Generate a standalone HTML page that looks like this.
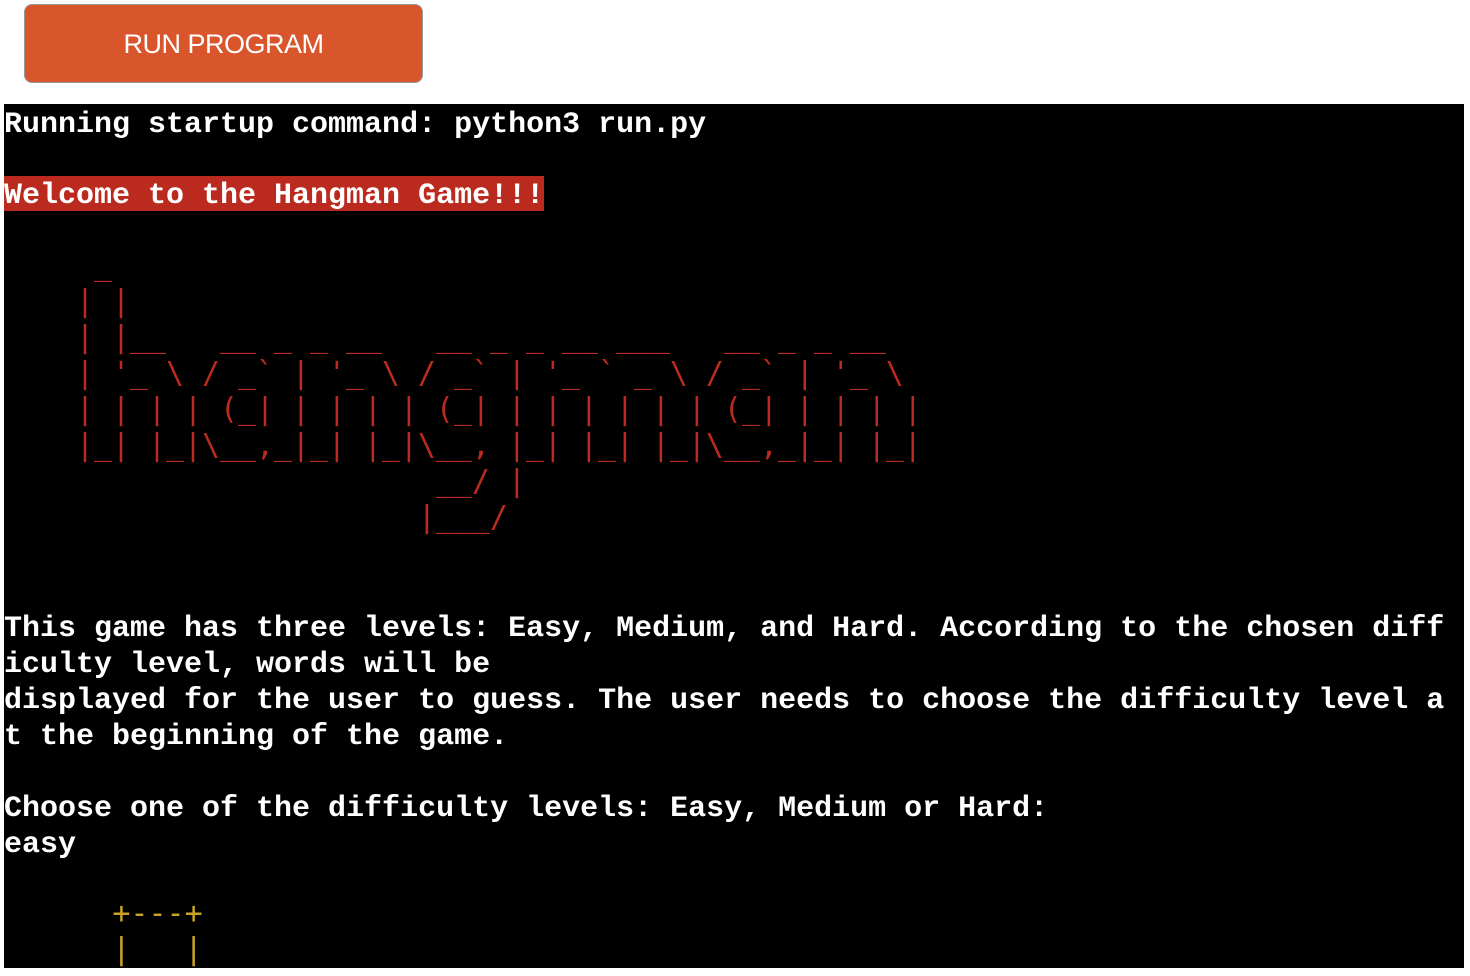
<!DOCTYPE html>
<html><head><meta charset="utf-8"><style>
html,body{margin:0;padding:0;background:#fff;width:1470px;height:976px;overflow:hidden}
.btn{position:absolute;left:24px;top:4px;width:399px;height:79px;background:#D9552B;border:1px solid #999;border-radius:8px;box-sizing:border-box;color:#fff;font:27px "Liberation Sans",Arial,sans-serif;display:flex;align-items:center;justify-content:center;padding-top:1px;letter-spacing:-0.5px}
.term{position:absolute;left:4px;top:104px;width:1460px;height:864px;background:#000;overflow:hidden}
pre{margin:0;font-family:"Liberation Mono","Courier New",monospace;font-weight:bold;font-size:30px;line-height:36px;height:36px;color:#fff;white-space:pre;overflow:visible}
.t{position:relative;top:3px}
.w{background:#BB2A1E;display:inline-block;height:35px;vertical-align:top}
.w span{position:relative;top:2px}
.art{font-family:"DejaVu Sans Mono",monospace;font-weight:normal;color:#BB2A1E;font-size:29.9px;line-height:36px}
.y{color:#C9A227;font-weight:normal;font-family:"DejaVu Sans Mono",monospace}
</style></head><body>
<div class="btn">RUN PROGRAM</div>
<div class="term">
<pre class="t">Running startup command: python3 run.py</pre>
<pre></pre>
<pre><span class="w"><span>Welcome to the Hangman Game!!!</span></span></pre>
<pre></pre>
<pre class="art">     _                                             </pre>
<pre class="art">    | |                                            </pre>
<pre class="art">    | |__   __ _ _ __   __ _ _ __ ___   __ _ _ __  </pre>
<pre class="art">    | '_ \ / _` | '_ \ / _` | '_ ` _ \ / _` | '_ \ </pre>
<pre class="art">    | | | | (_| | | | | (_| | | | | | | (_| | | | |</pre>
<pre class="art">    |_| |_|\__,_|_| |_|\__, |_| |_| |_|\__,_|_| |_|</pre>
<pre class="art">                        __/ |                      </pre>
<pre class="art">                       |___/                       </pre>
<pre></pre>
<pre></pre>
<pre class="t">This game has three levels: Easy, Medium, and Hard. According to the chosen diff</pre>
<pre class="t">iculty level, words will be</pre>
<pre class="t">displayed for the user to guess. The user needs to choose the difficulty level a</pre>
<pre class="t">t the beginning of the game.</pre>
<pre></pre>
<pre class="t">Choose one of the difficulty levels: Easy, Medium or Hard:</pre>
<pre class="t">easy</pre>
<pre></pre>
<pre class="y">      +---+</pre>
<pre class="y">      |   |</pre>
</div>
</body></html>
